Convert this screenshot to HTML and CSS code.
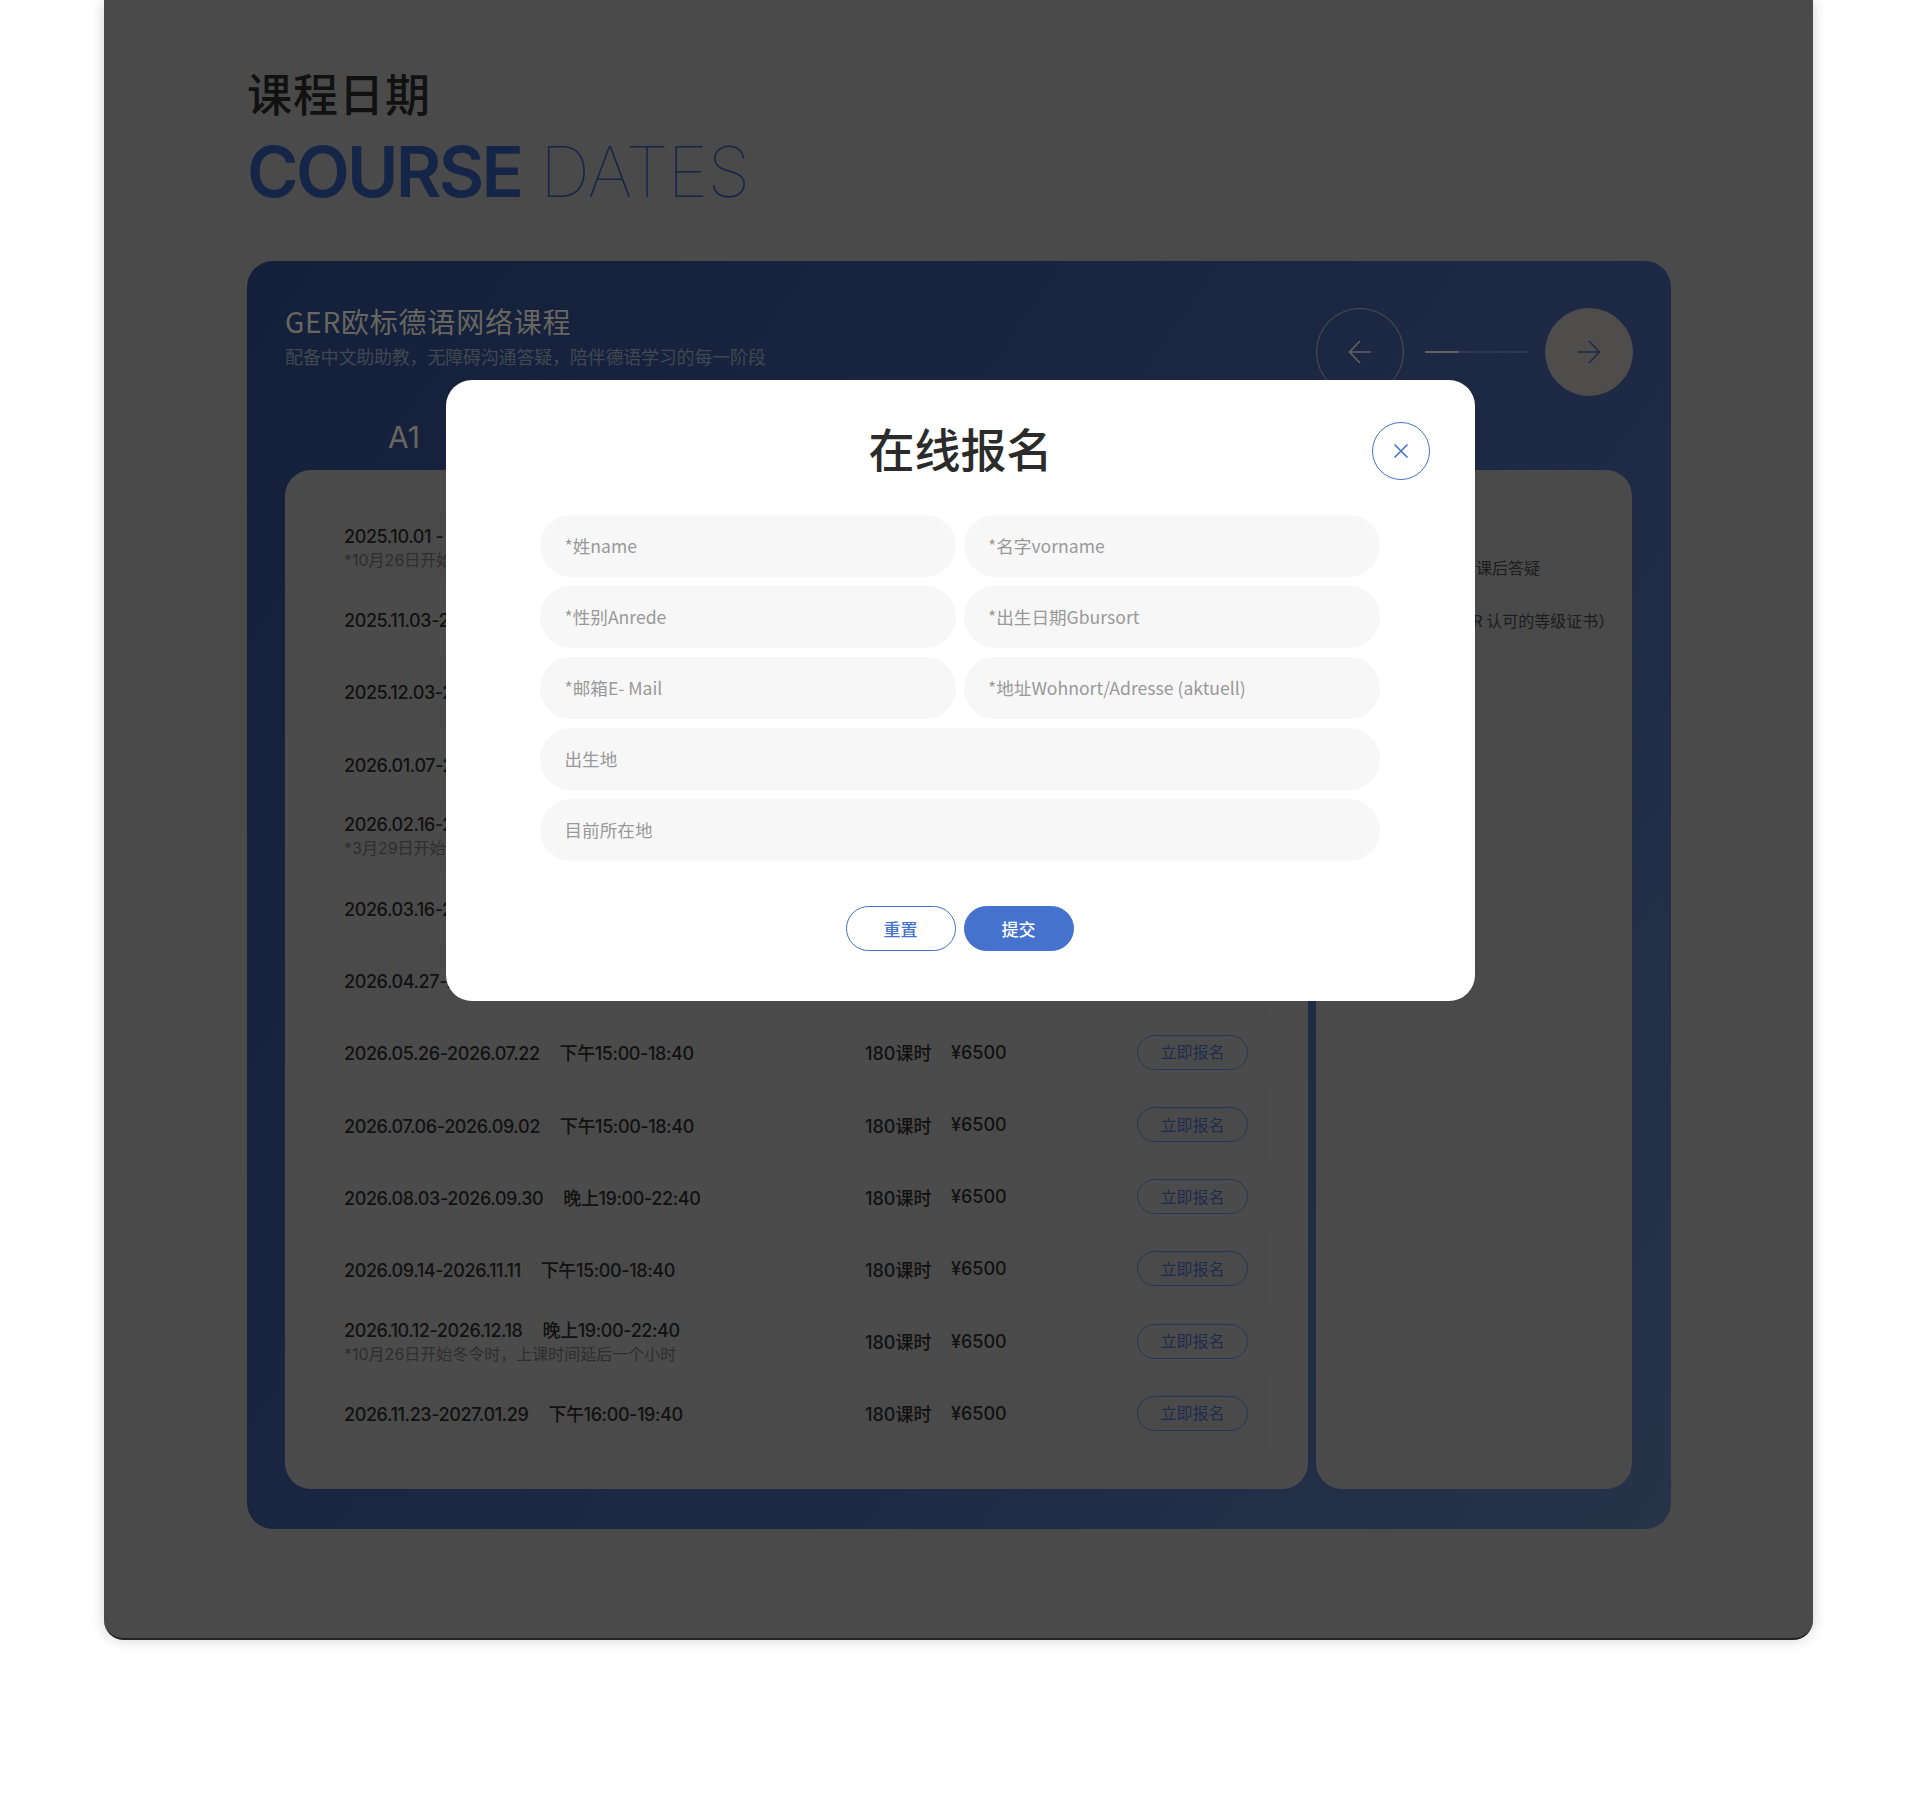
FILE: index.html
```html
<!DOCTYPE html>
<html lang="zh-CN">
<head>
    <meta charset="UTF-8">
    <title>课程日期</title>
    <link rel="stylesheet" href="styles.css">
</head>
<body>
    <section class="dates-panel">
        <h2 class="zh-title">课程日期</h2>
        <h1 class="en-title"><b>COURSE</b> DATES</h1>

        <div class="course-card">
            <div class="card-head">
                <div class="card-intro">
                    <h3>GER欧标德语网络课程</h3>
                    <p>配备中文助助教，无障碍沟通答疑，陪伴德语学习的每一阶段</p>
                </div>
                <div class="slider-nav">
                    <button class="nav-circle">
                        <svg width="24" height="24" viewBox="0 0 24 24"><path d="M23 12H1.5M12 1L1.5 12L12 23"/></svg>
                    </button>
                    <div class="progress"><span></span></div>
                    <button class="nav-circle active">
                        <svg width="24" height="24" viewBox="0 0 24 24"><path d="M1 12H22.5M12 1L22.5 12L12 23"/></svg>
                    </button>
                </div>
            </div>

            <div class="tabs">
                <div class="tab">A1</div>
                <div class="tab">A2</div>
                <div class="tab">B1</div>
                <div class="tab">B2</div>
            </div>

            <div class="card-body">
                <div class="schedule">
                    <div class="row shaded">
                        <div class="row-main"><div class="when"><span>2025.10.01 - 2025.12.05</span><span>下午15:00-18:40</span></div><div class="note">*10月26日开始冬令时，上课时间延后一个小时</div></div>
                        <div>180课时</div><div>¥6500</div><button class="sign-up">立即报名</button>
                    </div>
                    <div class="row">
                        <div class="row-main"><div class="when"><span>2025.11.03-2026.01.09</span><span>下午15:00-18:40</span></div></div>
                        <div>180课时</div><div>¥6500</div><button class="sign-up">立即报名</button>
                    </div>
                    <div class="row shaded">
                        <div class="row-main"><div class="when"><span>2025.12.03-2026.02.06</span><span>晚上19:00-22:40</span></div></div>
                        <div>180课时</div><div>¥6500</div><button class="sign-up">立即报名</button>
                    </div>
                    <div class="row">
                        <div class="row-main"><div class="when"><span>2026.01.07-2026.03.13</span><span>下午15:00-18:40</span></div></div>
                        <div>180课时</div><div>¥6500</div><button class="sign-up">立即报名</button>
                    </div>
                    <div class="row shaded">
                        <div class="row-main"><div class="when"><span>2026.02.16-2026.04.17</span><span>晚上19:00-22:40</span></div><div class="note">*3月29日开始夏令时，上课时间提前一个小时</div></div>
                        <div>180课时</div><div>¥6500</div><button class="sign-up">立即报名</button>
                    </div>
                    <div class="row">
                        <div class="row-main"><div class="when"><span>2026.03.16-2026.05.15</span><span>下午15:00-18:40</span></div></div>
                        <div>180课时</div><div>¥6500</div><button class="sign-up">立即报名</button>
                    </div>
                    <div class="row shaded">
                        <div class="row-main"><div class="when"><span>2026.04.27-2026.06.26</span><span>晚上19:00-22:40</span></div></div>
                        <div>180课时</div><div>¥6500</div><button class="sign-up">立即报名</button>
                    </div>
                    <div class="row">
                        <div class="row-main"><div class="when"><span>2026.05.26-2026.07.22</span><span>下午15:00-18:40</span></div></div>
                        <div>180课时</div><div>¥6500</div><button class="sign-up">立即报名</button>
                    </div>
                    <div class="row shaded">
                        <div class="row-main"><div class="when"><span>2026.07.06-2026.09.02</span><span>下午15:00-18:40</span></div></div>
                        <div>180课时</div><div>¥6500</div><button class="sign-up">立即报名</button>
                    </div>
                    <div class="row">
                        <div class="row-main"><div class="when"><span>2026.08.03-2026.09.30</span><span>晚上19:00-22:40</span></div></div>
                        <div>180课时</div><div>¥6500</div><button class="sign-up">立即报名</button>
                    </div>
                    <div class="row shaded">
                        <div class="row-main"><div class="when"><span>2026.09.14-2026.11.11</span><span>下午15:00-18:40</span></div></div>
                        <div>180课时</div><div>¥6500</div><button class="sign-up">立即报名</button>
                    </div>
                    <div class="row">
                        <div class="row-main"><div class="when"><span>2026.10.12-2026.12.18</span><span>晚上19:00-22:40</span></div><div class="note">*10月26日开始冬令时，上课时间延后一个小时</div></div>
                        <div>180课时</div><div>¥6500</div><button class="sign-up">立即报名</button>
                    </div>
                    <div class="row shaded">
                        <div class="row-main"><div class="when"><span>2026.11.23-2027.01.29</span><span>下午16:00-19:40</span></div></div>
                        <div>180课时</div><div>¥6500</div><button class="sign-up">立即报名</button>
                    </div>
                </div>

                <ul class="features">
                    <li>小班直播授课，含课后答疑</li>
                    <li>结业颁发欧标CEFR 认可的等级证书）</li>
                </ul>
            </div>
        </div>

        <!-- sign up dialog sits over the dimmed panel -->
        <div class="modal">
            <h2 class="modal-title">在线报名</h2>
            <button class="modal-close">
                <svg width="18" height="18" viewBox="0 0 18 18"><path d="M2.5 2.5L15.5 15.5M15.5 2.5L2.5 15.5"/></svg>
            </button>
            <form class="signup-form">
                <input class="field" placeholder="*姓name">
                <input class="field" placeholder="*名字vorname">
                <input class="field" placeholder="*性别Anrede">
                <input class="field" placeholder="*出生日期Gbursort">
                <input class="field" placeholder="*邮箱E- Mail">
                <input class="field" placeholder="*地址Wohnort/Adresse (aktuell)">
                <input class="field wide" placeholder="出生地">
                <input class="field wide" placeholder="目前所在地">
            </form>
            <div class="modal-actions">
                <button class="btn">重置</button>
                <button class="btn primary">提交</button>
            </div>
        </div>
    </section>
</body>
</html>
```

FILE: styles.css
```css
* {
    margin: 0;
    padding: 0;
    box-sizing: border-box;
}

body {
    background-color: #fff;
    font-family: "Noto Sans CJK SC", sans-serif;
    color: #111;
    height: 1799px;
    overflow: hidden;
}

button, input {
    font-family: inherit;
}

.dates-panel {
    position: relative;
    width: 1709px;
    height: 1640px;
    margin-left: 104px;
    padding: 63px 142px 0 143px;
    background-color: #4a4a4a;
    border-radius: 0 0 20px 20px;
    border-bottom: 2px solid #222;
    box-shadow: 0 0 14px rgba(0, 0, 0, 0.18);
}

.zh-title {
    font-size: 45px;
    line-height: 60px;
    font-weight: 500;
    color: #111;
    letter-spacing: 1px;
}

.en-title {
    margin-top: 7px;
    font-family: Inter, sans-serif;
    font-size: 70px;
    line-height: 84px;
    font-weight: 100;
    color: #152548;
    letter-spacing: -1px;
}

.en-title b {
    font-weight: 600;
    letter-spacing: -2.7px;
}

.course-card {
    height: 1268px;
    margin-top: 47px;
    padding: 42px 38px 39px 38px;
    border-radius: 26px;
    background: linear-gradient(125deg, #14203a 0%, #1c2844 55%, #263349 100%);
}

.card-head {
    display: flex;
    justify-content: space-between;
    align-items: flex-start;
}

.card-intro h3 {
    font-size: 28px;
    line-height: 36px;
    font-weight: 400;
    color: #68665f;
    letter-spacing: 0.8px;
}

.card-intro p {
    margin-top: 5px;
    font-size: 18px;
    line-height: 24px;
    color: #414852;
    letter-spacing: -0.2px;
}

.slider-nav {
    display: flex;
    align-items: center;
    gap: 17px;
    margin-top: 5px;
}

.nav-circle {
    display: flex;
    justify-content: center;
    align-items: center;
    width: 88px;
    height: 88px;
    border: 1.5px solid #53524e;
    border-radius: 50%;
    background: none;
}

.nav-circle svg path {
    fill: none;
    stroke: #66635c;
    stroke-width: 1.6;
}

.nav-circle.active {
    background-color: #4e4d4b;
    border-color: #4e4d4b;
}

.nav-circle.active svg path {
    stroke: #1c2a4a;
}

.progress {
    width: 103px;
    height: 2px;
    margin-left: 4px;
    background-color: #2c3750;
}

.progress span {
    display: block;
    width: 34px;
    height: 2px;
    background-color: #66635c;
}

.tabs {
    display: flex;
    height: 74px;
    padding: 24px 0 0 103px;
}

.tab {
    width: 238px;
    font-family: Inter, sans-serif;
    font-size: 30px;
    line-height: 34px;
    color: #68665f;
}

.card-body {
    display: flex;
    gap: 8px;
}

.schedule {
    width: 1023px;
    padding: 41px 41px 40px 39px;
    border-radius: 26px;
    background-color: #4b4b4b;
}

.row {
    display: grid;
    grid-template-columns: 521px 86px 186px 111px;
    align-items: center;
    height: 72.2px;
    padding-left: 20px;
    font-family: Inter, "Noto Sans CJK SC", sans-serif;
    font-size: 18px;
    font-weight: 500;
}

.row.shaded {
    background-color: #4a4a4a;
}

.when {
    display: flex;
    gap: 20px;
    line-height: 24px;
    letter-spacing: -0.4px;
}

.when:only-child {
    margin-top: 4px;
}

.note {
    margin-top: 2px;
    font-size: 16px;
    line-height: 19px;
    font-weight: 400;
    color: #2e2e2e;
}

.sign-up {
    width: 111px;
    height: 35px;
    padding-bottom: 2px;
    border: 1.5px solid #26355a;
    border-radius: 18px;
    background: none;
    color: #1e2c4e;
    font-family: "Noto Sans CJK SC", sans-serif;
    font-size: 16px;
}

.features {
    width: 316px;
    padding: 85px 0 0 32px;
    border-radius: 26px;
    background-color: #4a4a4a;
    list-style: none;
    font-size: 16px;
    line-height: 24px;
    color: #1c1c1c;
}

.features li {
    margin-bottom: 29px;
    white-space: nowrap;
}

.modal {
    position: absolute;
    left: 342px;
    top: 380px;
    width: 1029px;
    height: 621px;
    padding-top: 36px;
    border-radius: 26px;
    background-color: #fff;
}

.modal-title {
    font-size: 46px;
    line-height: 62px;
    font-weight: 500;
    text-align: center;
    color: #2b2b2b;
}

.modal-close {
    position: absolute;
    top: 42px;
    right: 45px;
    display: flex;
    justify-content: center;
    align-items: center;
    width: 58px;
    height: 58px;
    border: 1.5px solid #4472cc;
    border-radius: 50%;
    background: none;
}

.modal-close svg path {
    fill: none;
    stroke: #4472cc;
    stroke-width: 1.6;
}

.signup-form {
    display: grid;
    grid-template-columns: 415.5px 416.5px;
    gap: 9px 8px;
    margin: 37px 94px 0;
}

.field {
    height: 62px;
    padding: 0 0 2px 24.5px;
    border: none;
    border-radius: 31px;
    background-color: #f7f7f7;
    font-size: 17.6px;
}

.field::placeholder {
    color: #999;
    opacity: 1;
}

.field.wide {
    grid-column: 1 / 3;
}

.modal-actions {
    display: flex;
    justify-content: center;
    gap: 8px;
    margin-top: 45px;
    padding-right: 2px;
}

.btn {
    width: 110px;
    height: 45px;
    border: 1.5px solid #4472cc;
    border-radius: 23px;
    background-color: #fff;
    color: #4472cc;
    font-size: 17px;
    font-weight: 500;
}

.btn.primary {
    background-color: #4472cc;
    color: #fff;
}
```
